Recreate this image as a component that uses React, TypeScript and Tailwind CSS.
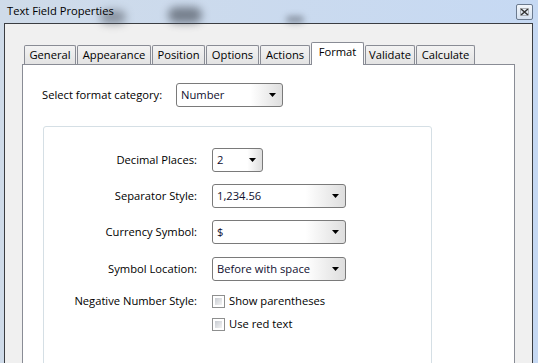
import React from 'react'

const tabs = [
  { label: 'General', w: 'w-[52px]' },
  { label: 'Appearance', w: 'w-[74px]' },
  { label: 'Position', w: 'w-[53px]' },
  { label: 'Options', w: 'w-[53px]' },
  { label: 'Actions', w: 'w-[50px]' },
  { label: 'Format', w: 'w-[53px]', active: true },
  { label: 'Validate', w: 'w-[50px]' },
  { label: 'Calculate', w: 'w-[59px]' },
]

function Arrow() {
  return (
    <svg width="7" height="4" viewBox="0 0 7 4" className="shrink-0">
      <path d="M0 0h7L3.5 4z" fill="#000" />
    </svg>
  )
}

function Combo({ value, width }: { value: string; width: string }) {
  return (
    <div
      className={`${width} h-[24px] flex items-center rounded-[3px] border border-[#7a7a7a] bg-gradient-to-r from-white from-70% to-[#dedede] pl-[4px] pr-[6px]`}
    >
      <span className="flex-1 whitespace-nowrap text-[#101030]">{value}</span>
      <Arrow />
    </div>
  )
}

function Checkbox({ label }: { label: string }) {
  return (
    <div className="flex items-center h-[16px]">
      <div className="w-[13px] h-[13px] border border-[#8e8f8f] bg-white p-[2px]">
        <div className="w-full h-full bg-gradient-to-br from-[#c8ccd2] to-[#f4f4f4]" />
      </div>
      <span className="ml-[4px] whitespace-nowrap">{label}</span>
    </div>
  )
}

function Row({ label, children, className }: { label: string; children: React.ReactNode; className: string }) {
  return (
    <div className={`flex items-center ${className}`}>
      <div className="w-[154px] text-right pr-[1px] whitespace-nowrap">{label}</div>
      <div className="ml-[14px]">{children}</div>
    </div>
  )
}

export default function App() {
  return (
    <div className="relative w-[538px] h-[363px] overflow-hidden bg-gradient-to-r from-[#cfdbe9] to-[#c6d9f3] font-['Open_Sans',sans-serif] text-[11.2px] leading-normal text-black">
      {/* blurred desktop behind the glass */}
      <div className="absolute left-[100px] top-[10px] w-[26px] h-[14px] rounded-full bg-[#4a505a] opacity-50 blur-[4px]" />
      <div className="absolute left-[168px] top-[7px] w-[34px] h-[16px] rounded-full bg-[#3e444e] opacity-60 blur-[4px]" />
      <div className="absolute left-[286px] top-[16px] w-[18px] h-[7px] rounded-full bg-[#4a505a] opacity-50 blur-[3px]" />

      <div className="relative h-[23px] flex items-center pl-[7px]">
        <span className="whitespace-nowrap">Text Field Properties</span>
        <div className="absolute left-[516px] top-[4px] w-[17px] h-[16px] rounded-[2px] border border-[#6b7a8e] bg-gradient-to-b from-[#f2f6fb] to-[#d6e2f1] flex items-center justify-center">
          <svg width="9" height="8" viewBox="0 0 9 8">
            <path d="M1 1l7 6M8 1L1 7" stroke="#333" strokeWidth="1.6" />
            <rect x="0.5" y="0.5" width="8" height="7" fill="none" stroke="#888" strokeWidth="0.6" />
          </svg>
        </div>
      </div>

      <div className="ml-[4px] w-[529px] h-[360px] border border-[#3a3d42] bg-[#f0f0f0]">
        <div className="px-[17px] pt-[18px]">
          <div className="flex items-end h-[22px] pl-[2px]">
            {tabs.map((t) =>
              t.active ? (
                <div
                  key={t.label}
                  className={`${t.w} mr-[1px] h-[23px] -mb-[1px] relative z-10 bg-white border border-b-0 border-[#898c95] rounded-t-[2px] flex items-center justify-center pb-[3px]`}
                >
                  {t.label}
                </div>
              ) : (
                <div
                  key={t.label}
                  className={`${t.w} mr-[1px] h-[19px] bg-gradient-to-b from-[#f3f3f3] to-[#e3e3e3] border border-b-0 border-[#898c95] rounded-t-[2px] flex items-center justify-center`}
                >
                  {t.label}
                </div>
              ),
            )}
          </div>

          <div className="h-[320px] bg-white border border-[#898c95]">
            <div className="flex items-center mt-[18px] pl-[19px]">
              <div className="w-[134px] whitespace-nowrap">Select format category:</div>
              <Combo value="Number" width="w-[107px]" />
            </div>

            <div className="ml-[20px] mt-[19px] w-[389px] h-[260px] border border-[#d5dfe5] rounded-[3px]">
              <Row label="Decimal Places:" className="mt-[21px]">
                <Combo value="2" width="w-[51px]" />
              </Row>
              <Row label="Separator Style:" className="mt-[12px]">
                <Combo value="1,234.56" width="w-[134px]" />
              </Row>
              <Row label="Currency Symbol:" className="mt-[12px]">
                <Combo value="$" width="w-[134px]" />
              </Row>
              <Row label="Symbol Location:" className="mt-[13px]">
                <Combo value="Before with space" width="w-[134px]" />
              </Row>
              <Row label="Negative Number Style:" className="mt-[12px]">
                <Checkbox label="Show parentheses" />
              </Row>
              <div className="flex mt-[7px]">
                <div className="w-[154px]" />
                <div className="ml-[14px]">
                  <Checkbox label="Use red text" />
                </div>
              </div>
            </div>
          </div>
        </div>
      </div>
    </div>
  )
}
